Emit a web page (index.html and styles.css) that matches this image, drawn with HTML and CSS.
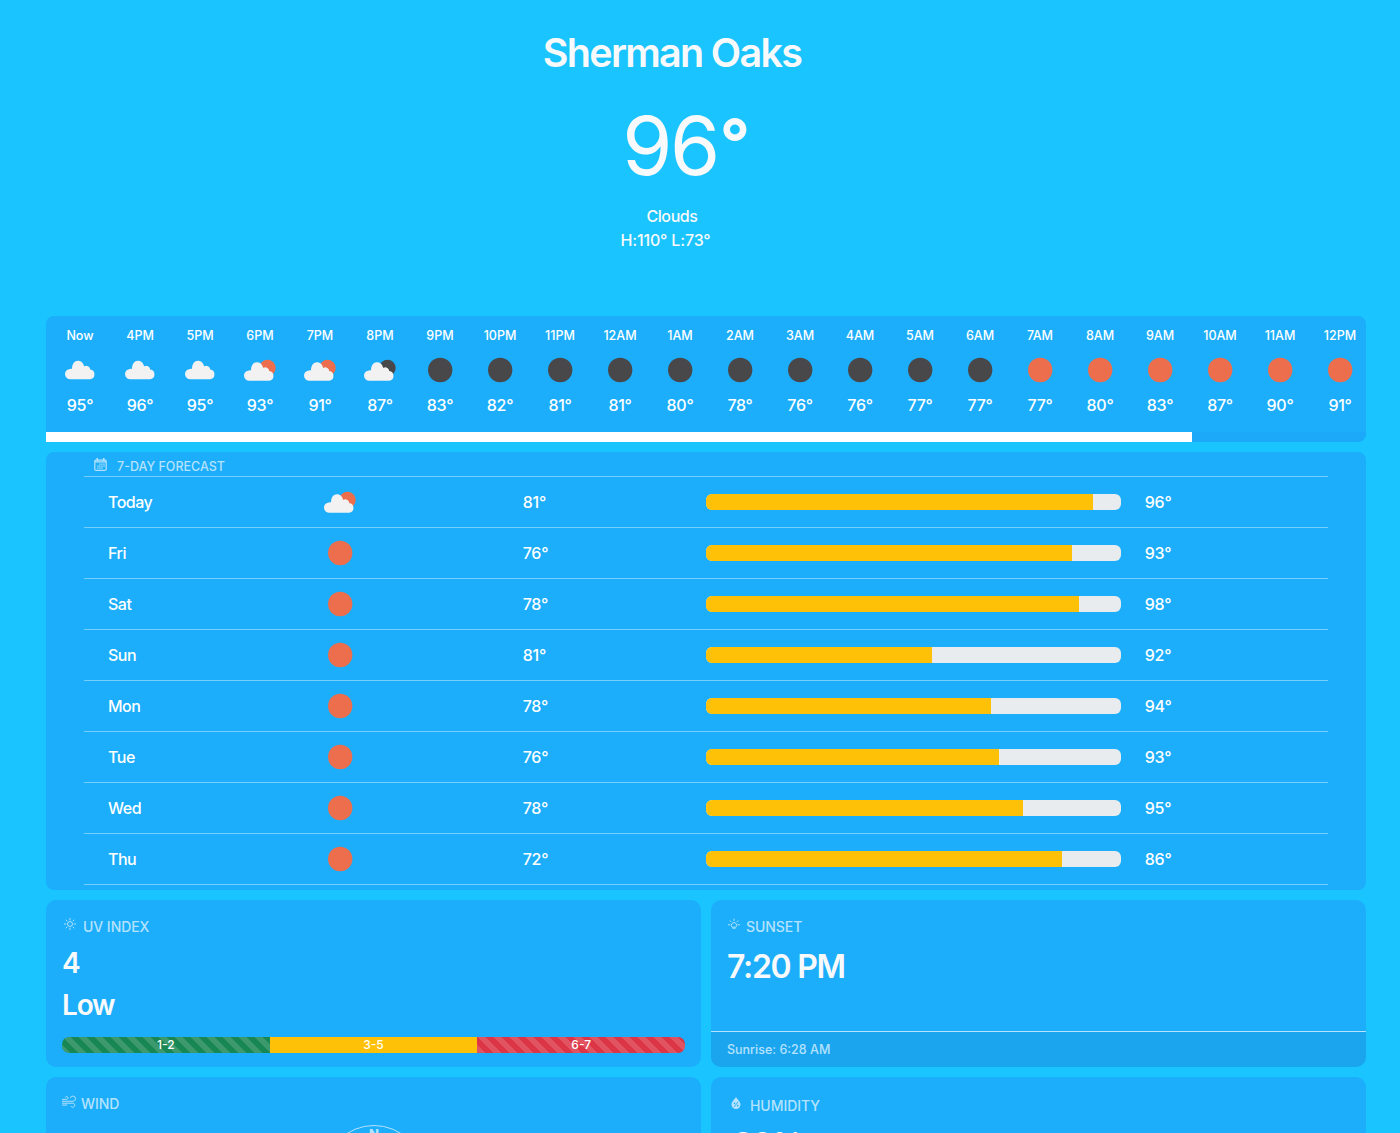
FILE: index.html
```html
<!DOCTYPE html>
<html lang="en">
<head>
<meta charset="utf-8">
<title>Weather</title>
<link rel="stylesheet" href="styles.css">
</head>
<body>
<svg class="defs" aria-hidden="true">
  <symbol id="cloudlet" viewBox="0 0 30 20"><path class="c-cloud" d="M5.500 19.300a5.200 5.200 0 0 1-.5-10.400c.6-.1 1.300 0 1.900.1C6.700 4 9.300.7 12.600.7c3 0 5.400 2.100 5.900 5.400q.2.400.6.200a3.700 3.700 0 0 1 5.400 3.300a4.900 4.900 0 0 1-.1 9.700z" transform="translate(-.3 0) scale(1.030 1)"/></symbol>
</svg>
<main class="page">
  <header class="hero">
    <h1 class="city">Sherman Oaks</h1>
    <div class="temp">96<span class="deg">°</span></div>
    <p class="cond">Clouds</p>
    <p class="range">H:110° L:73°</p>
  </header>
  <section class="card hourly">
    <div class="hours" id="hours"></div>
    <div class="scroll"><div class="thumb"></div></div>
  </section>
  <section class="card week">
    <div class="week-title">
      <svg class="cal" viewBox="0 0 16 16"><path fill="none" stroke="currentColor" stroke-width="1.500" d="M2.500 2.500h11q1.500 0 1.500 1.500v9.700q0 1.500-1.500 1.500h-11q-1.500 0-1.500-1.500V4q0-1.500 1.500-1.500zM1 4.700h14"/><path d="M3 0h2v3.500H3zM11 0h2v3.500h-2zM6.500 6.700h1.600v1.600H6.500zM9 6.700h1.600v1.600H9zM11.500 6.700h1.600v1.600h-1.600zM4 9.200h1.600v1.600H4zM6.500 9.200h1.600v1.600H6.500zM9 9.200h1.600v1.600H9zM11.500 9.200h1.600v1.600h-1.600zM4 11.700h1.600v1.400H4zM6.500 11.700h1.600v1.400H6.500zM9 11.700h1.600v1.400H9z" fill="currentColor"/></svg>
      <span>7-DAY FORECAST</span>
    </div>
    <div id="days"></div>
  </section>
  <div class="grid">
    <section class="card tile uv">
      <h2 class="label"><svg class="ico" viewBox="0 0 16 16"><g fill="none" stroke="currentColor" stroke-width="1.300"><circle cx="8" cy="8" r="3.300"/><path d="M8 0v3M8 13v3M0 8h3M13 8h3M2.300 2.300l2 2M11.700 11.700l2 2M13.700 2.300l-2 2M2.300 13.700l2-2"/></g></svg>UV INDEX</h2>
      <p class="uv-value">4</p>
      <p class="uv-value uv-level">Low</p>
      <div class="scale"><span class="seg low">1-2</span><span class="seg mid">3-5</span><span class="seg high">6-7</span></div>
    </section>
    <section class="card tile sun">
      <h2 class="label"><svg class="ico sun-ico" viewBox="0 0 16 16"><g fill="none" stroke="currentColor" stroke-width="1.300"><path d="M5.500 12.300a3.600 3.600 0 1 1 5 0zM8 .8v3M0 9h3M13 9h3M2.300 3.300l2 2M13.700 3.300l-2 2M6 13.700h4"/></g></svg>SUNSET</h2>
      <p class="sun-time">7:20 PM</p>
      <p class="sun-foot">Sunrise: 6:28 AM</p>
    </section>
    <section class="card tile wind">
      <h2 class="label"><svg class="ico wind-ico" viewBox="0 0 16 16"><g fill="none" stroke="currentColor" stroke-width="1.100"><path d="M0 5h5.200a1.600 1.600 0 1 0-1.500-2.200M0 7.200h12.500a3 3 0 1 0-3-3.600M0 9.400h12.500a2.300 2.300 0 1 1-2.300 3.300M0 11.500h6"/></g></svg>WIND</h2>
      <svg class="compass" viewBox="0 0 100 100"><circle cx="50" cy="50" r="49.500"/><text x="50" y="14">N</text></svg>
    </section>
    <section class="card tile humid">
      <h2 class="label"><svg class="ico drop-ico" viewBox="0 0 16 16"><path fill="currentColor" d="M8 0C6.500 3 2 6 2 10a6 6 0 0 0 12 0C14 6 9.500 3 8 0z"/><path d="M10.500 6.500l-5 7" stroke="#1caefb" stroke-width="1.100"/><circle cx="6" cy="8.500" r="1.100" fill="#1caefb"/><circle cx="10.300" cy="11.500" r="1.100" fill="#1caefb"/></svg>HUMIDITY</h2>
      <p class="humid-value">20%</p>
    </section>
  </div>
</main>
<script src="app.js"></script>
</body>
</html>
```
FILE: app.js
```js
const cloud = '<svg class="wx" viewBox="0 0 50 50"><use href="#cloudlet" x="9.500" y="15" width="31.500" height="20"/></svg>';
const disc = (cls) => `<svg class="wx" viewBox="0 0 50 50"><circle class="${cls}" cx="25.200" cy="25" r="12.200"/></svg>`;
const part = (cls) => `<svg class="wx" viewBox="0 0 50 50"><circle class="${cls}" cx="32.500" cy="23" r="8.200"/><use href="#cloudlet" x="8.500" y="16.500" width="31.500" height="20"/></svg>`;
const icons = { c: cloud, s: disc('c-sun'), m: disc('c-moon'), p: part('c-sun'), n: part('c-moon') };

const hours = [
  ['Now', 'c', 95], ['4PM', 'c', 96], ['5PM', 'c', 95], ['6PM', 'p', 93], ['7PM', 'p', 91], ['8PM', 'n', 87],
  ['9PM', 'm', 83], ['10PM', 'm', 82], ['11PM', 'm', 81], ['12AM', 'm', 81], ['1AM', 'm', 80], ['2AM', 'm', 78],
  ['3AM', 'm', 76], ['4AM', 'm', 76], ['5AM', 'm', 77], ['6AM', 'm', 77], ['7AM', 's', 77], ['8AM', 's', 80],
  ['9AM', 's', 83], ['10AM', 's', 87], ['11AM', 's', 90], ['12PM', 's', 91],
];
document.getElementById('hours').innerHTML = hours.map(([t, i, d]) =>
  `<div class="hour"><span class="hour-time">${t}</span>${icons[i]}<span class="hour-temp">${d}°</span></div>`).join('');

const days = [
  ['Today', 'p', 81, 387, 96], ['Fri', 's', 76, 366, 93], ['Sat', 's', 78, 373, 98], ['Sun', 's', 81, 226, 92],
  ['Mon', 's', 78, 285, 94], ['Tue', 's', 76, 293, 93], ['Wed', 's', 78, 317, 95], ['Thu', 's', 72, 356, 86],
];
document.getElementById('days').innerHTML = days.map(([t, i, lo, w, hi]) =>
  `<div class="day"><span class="cell name">${t}</span><span class="cell">${icons[i]}</span><span class="cell">${lo}°</span><div class="bar"><div class="fill" style="width:${w}px"></div></div><span class="cell">${hi}°</span></div>`).join('');
```
FILE: styles.css
```css
* { box-sizing: border-box; }
body { margin: 0; height: 1133px; overflow: hidden; background: #1ac4ff; color: #f8f9fa; font: 450 16px/24px Inter, "Liberation Sans", sans-serif; }
h1, h2, p { margin: 0; font-weight: 450; }
.defs { display: none; }
.page { width: 1320px; height: 1133px; overflow: hidden; margin-left: 46px; }
.hero { height: 316px; width: 1252px; padding-top: 29px; display: flex; flex-direction: column; align-items: center; }
.city { font-size: 39.500px; line-height: 48px; font-weight: 600; letter-spacing: -1.700px; }
.temp { font-size: 81px; line-height: 96px; margin-top: 21px; margin-left: 26px; letter-spacing: -2.500px; height: 106px; font-weight: 430; }
.deg { display: inline-block; font-size: 66px; line-height: 64px; font-weight: 750; transform: translateY(-9px); margin-left: 2px; }
.cond { letter-spacing: -.4px; }
.range { letter-spacing: -.15px; margin-left: -13px; }
.card { background: #1caefb; border-radius: 8px; overflow: hidden; }
.hourly { height: 126px; display: flex; flex-direction: column; color: #fff; border-bottom-left-radius: 0; }
.hours { display: flex; padding-left: 4px; height: 116px; }
.hour { width: 60px; flex: none; display: flex; flex-direction: column; align-items: center; padding-top: 10px; }
.hour-time { font-size: 12.500px; line-height: 19px; font-weight: 500; }
.hour-temp { font-weight: 500; font-size: 16px; letter-spacing: -.3px; margin-top: -1px; }
.hour .wx { margin-top: -.5px; margin-bottom: -.5px; }
.wx { display: block; width: 50px; height: 50px; flex: none; }
.c-cloud { fill: #f2f2f2; }
.c-sun { fill: #ec6e4c; }
.c-moon { fill: #48484a; }
.scroll { height: 10px; background: #1ca9f9; border-radius: 0 0 8px 0; }
.thumb { width: 1146px; height: 10px; background: #fff; }
.week { height: 438px; margin-top: 10px; padding: 0 38px; color: #fff; }
.week-title { display: flex; align-items: center; gap: 10px; height: 25px; padding: 5px 0 0 10px; border-bottom: 1px solid #77cefd; font-size: 12.500px; color: #b5e2fd; }
.cal { width: 13px; height: 13px; margin-top: -4px; }
.day { height: 51px; border-bottom: 1px solid #77cefd; display: grid; grid-template-columns: 2fr 2fr 2fr 4fr 2fr; align-items: center; }
.cell { padding-left: 24px; letter-spacing: -.2px; }
.name { letter-spacing: -.5px; }
.bar { height: 16px; border-radius: 6px; overflow: hidden; background: #e9ecef; }
.fill { height: 16px; background: #ffc107; }
.grid { display: grid; grid-template-columns: 655px 655px; gap: 10px; margin-top: 10px; grid-template-rows: 167px 167px; }
.tile { padding: 16px; display: flex; flex-direction: column; border-radius: 10px; }
.label { display: flex; align-items: center; font-size: 14px; line-height: 21px; color: #b5e2fd; letter-spacing: -.05px; }
.ico { width: 12px; height: 12px; margin: -6px 7px 0 2px; }
.sun-ico { margin: -5px 6px 0 1px; }
.wind-ico { width: 14px; height: 14px; margin: -4px 5px 0 0; }
.uv-value { font-size: 28px; line-height: 34px; font-weight: 600; margin-top: 9px; letter-spacing: -1.200px; }
.uv-level { margin-top: 8px; }
.scale { display: flex; flex: none; height: 16px; margin-top: 15px; border-radius: 7px; overflow: hidden; font-size: 12px; line-height: 16px; text-align: center; color: #fff; }
.seg { flex: 1; background-size: 16px 16px; }
.low { background-color: #198754; }
.mid { background-color: #ffc107; }
.high { background-color: #dc3545; }
.low, .high { background-image: linear-gradient(45deg, rgba(255,255,255,.15) 25%, transparent 25%, transparent 50%, rgba(255,255,255,.15) 50%, rgba(255,255,255,.15) 75%, transparent 75%, transparent); }
.sun-time { font-size: 32px; line-height: 38px; font-weight: 600; margin-top: 11px; letter-spacing: -1.300px; }
.sun-foot { margin: auto -16px -16px; height: 36px; padding: 8px 16px; border-top: 1px solid #b5e2fd; background: #1ba5ef; font-size: 12.500px; line-height: 20px; color: #b5e2fd; }
.compass { width: 100px; height: 100px; margin: 11px auto 0; flex: none; }
.compass circle { fill: none; stroke: #b5e2fd; }
.compass text { fill: #b5e2fd; font-size: 13px; font-weight: 800; text-anchor: middle; }
.humid .label { margin-top: 2px; }
.drop-ico { margin: -6px 8px 0 3px; }
.humid-value { font-size: 32px; line-height: 38px; font-weight: 600; margin: 10px 0 0 6px; letter-spacing: -1.300px; }
```
